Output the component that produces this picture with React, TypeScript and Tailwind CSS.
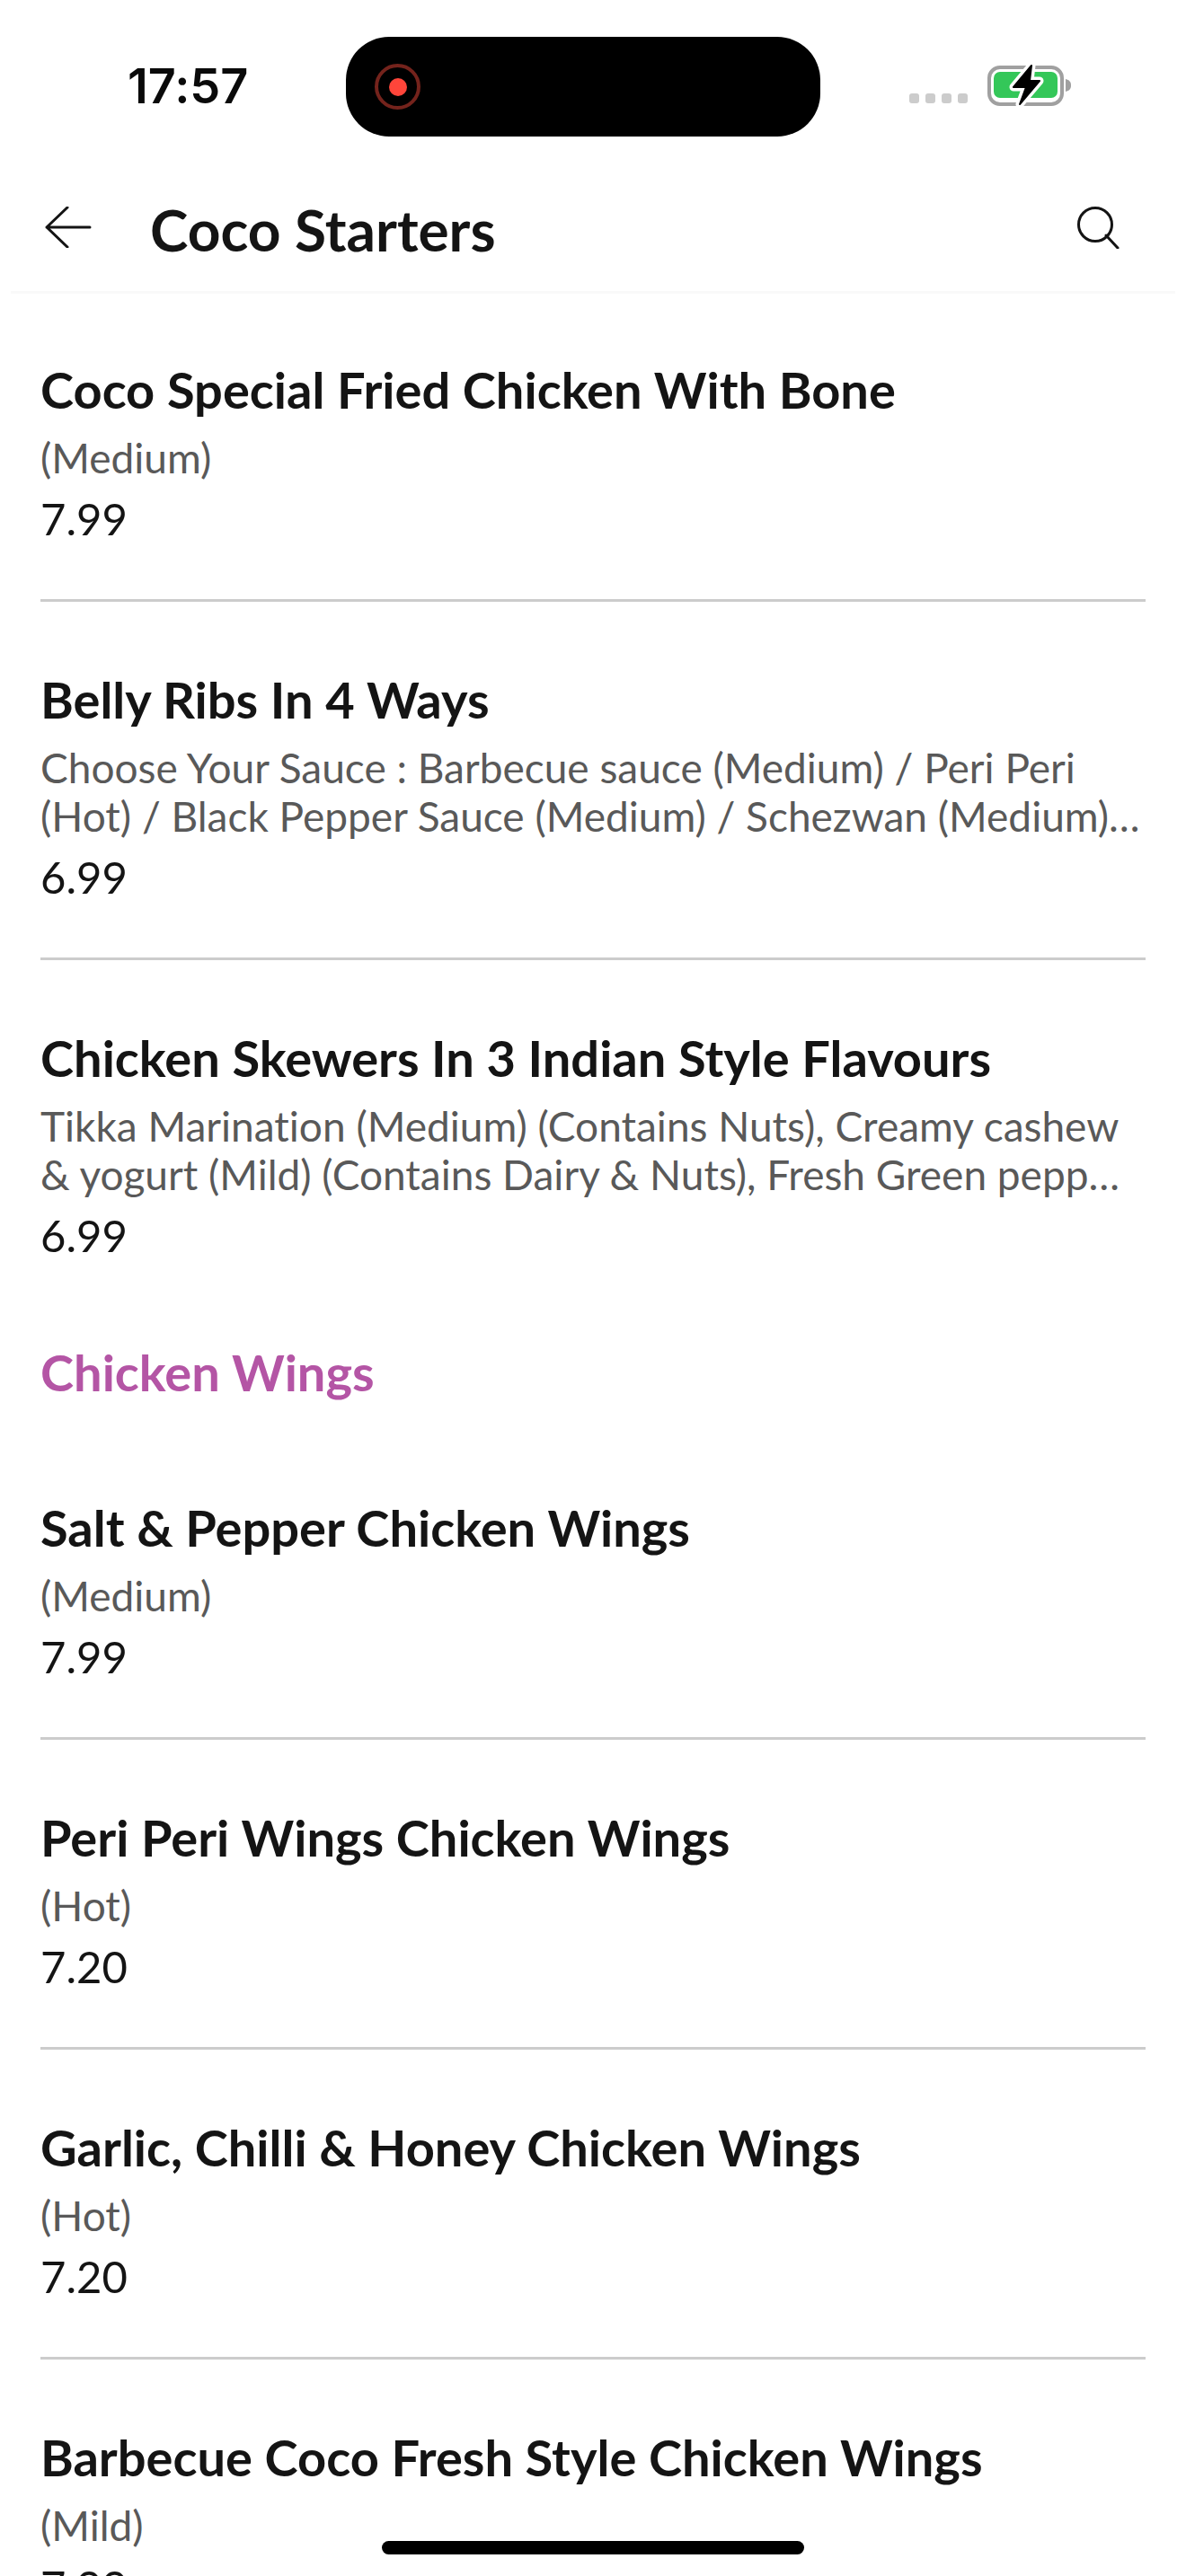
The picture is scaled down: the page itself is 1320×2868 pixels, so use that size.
type Item = { name: string; desc: string; price: string; last?: boolean };

const starters: Item[] = [
  { name: 'Coco Special Fried Chicken With Bone', desc: '(Medium)', price: '7.99' },
  {
    name: 'Belly Ribs In 4 Ways',
    desc: 'Choose Your Sauce : Barbecue sauce (Medium) / Peri Peri (Hot) / Black Pepper Sauce (Medium) / Schezwan (Medium)…',
    price: '6.99',
  },
  {
    name: 'Chicken Skewers In 3 Indian Style Flavours',
    desc: 'Tikka Marination (Medium) (Contains Nuts), Creamy cashew & yogurt (Mild) (Contains Dairy & Nuts), Fresh Green pepp…',
    price: '6.99',
    last: true,
  },
];

const wings: Item[] = [
  { name: 'Salt & Pepper Chicken Wings', desc: '(Medium)', price: '7.99' },
  { name: 'Peri Peri Wings Chicken Wings', desc: '(Hot)', price: '7.20' },
  { name: 'Garlic, Chilli & Honey Chicken Wings', desc: '(Hot)', price: '7.20' },
  { name: 'Barbecue Coco Fresh Style Chicken Wings', desc: '(Mild)', price: '7.99', last: true },
];

function MenuItem({ item }: { item: Item }) {
  return (
    <div className={item.last ? 'pt-[76px]' : 'pt-[76px] pb-[60px] border-b-[3px] border-[#cccccc]'}>
      <p className="text-[56px] leading-[66px] font-bold text-[#141414]">{item.name}</p>
      <p className="mt-[16px] text-[46px] leading-[54px] text-[#595959]">{item.desc}</p>
      <p className="mt-[10px] text-[49px] leading-[60px] text-[#141414]">{item.price}</p>
    </div>
  );
}

function StatusBar() {
  return (
    <div className="relative h-[190px] flex items-start">
      <span className="ml-[142px] mt-[64px] text-[54px] leading-[64px] font-semibold text-[#0a0a0a] font-['Inter',sans-serif]">
        17:57
      </span>
      <div className="absolute left-[385px] top-[41px] w-[528px] h-[111px] rounded-[48px] bg-black flex items-center pl-[32px]">
        <div className="w-[51px] h-[51px] rounded-full border-[4px] border-[#74231c] flex items-center justify-center">
          <div className="w-[20px] h-[20px] rounded-full bg-[#ff453a]" />
        </div>
      </div>
      <div className="ml-auto mr-[127px] mt-[72px] flex items-end gap-[21px]">
        <div className="flex gap-[7px] pb-[3px]">
          <div className="w-[11px] h-[11px] rounded-[3px] bg-[#cccccc]" />
          <div className="w-[11px] h-[11px] rounded-[3px] bg-[#cccccc]" />
          <div className="w-[11px] h-[11px] rounded-[3px] bg-[#cccccc]" />
          <div className="w-[11px] h-[11px] rounded-[3px] bg-[#cccccc]" />
        </div>
        <svg width="95" height="46" viewBox="0 0 95 46">
          <rect x="3" y="3" width="81" height="41" rx="12" fill="none" stroke="#a0a0a0" strokeWidth="4" />
          <rect x="8" y="8" width="71" height="29" rx="7" fill="#34c759" />
          <path d="M88 16c4 1 6 3 6 7s-2 6-6 7z" fill="#a0a0a0" />
          <path d="M50 1 L30 25 H44 L37 44 L59 18 H48 Z" fill="#fff" stroke="#fff" strokeWidth="9" strokeLinejoin="round" />
          <path d="M50 1 L30 25 H44 L37 44 L59 18 H48 Z" fill="#000" stroke="#000" strokeWidth="2" strokeLinejoin="round" />
        </svg>
      </div>
    </div>
  );
}

export default function App() {
  return (
    <div className="relative w-[1320px] h-[2868px] overflow-hidden bg-white font-['Lato',sans-serif] [font-variant-ligatures:none]">
      <StatusBar />

      <div className="h-[137px] mx-[12px] pl-[38px] pr-[62px] flex items-center border-b-[3px] border-[#f9f9f9]">
        <svg width="52" height="46" viewBox="0 0 52 46" fill="none" stroke="#141414" strokeWidth="3" strokeLinecap="round" strokeLinejoin="round" className="-mt-[8px]">
          <path d="M50 23H2M25 1L2 23l23 22" />
        </svg>
        <h1 className="ml-[65px] -mt-[2px] text-[64px] font-bold text-[#141414]">Coco Starters</h1>
        <svg width="48" height="48" viewBox="0 0 48 48" fill="none" stroke="#141414" strokeWidth="3" strokeLinecap="round" className="ml-auto -mt-[8px]">
          <circle cx="21" cy="21" r="18.5" />
          <path d="M33 33l13 14" />
        </svg>
      </div>

      <div className="px-[45px] -mt-[2px]">
        {starters.map((item) => (
          <MenuItem key={item.name} item={item} />
        ))}

        <h2 className="mt-[90px] mb-[31px] text-[56px] leading-[66px] font-bold text-[#b455a5]">Chicken Wings</h2>

        {wings.map((item) => (
          <MenuItem key={item.name} item={item} />
        ))}
      </div>

      <div className="absolute left-[425px] bottom-[24px] w-[470px] h-[15px] rounded-full bg-black" />
    </div>
  );
}
